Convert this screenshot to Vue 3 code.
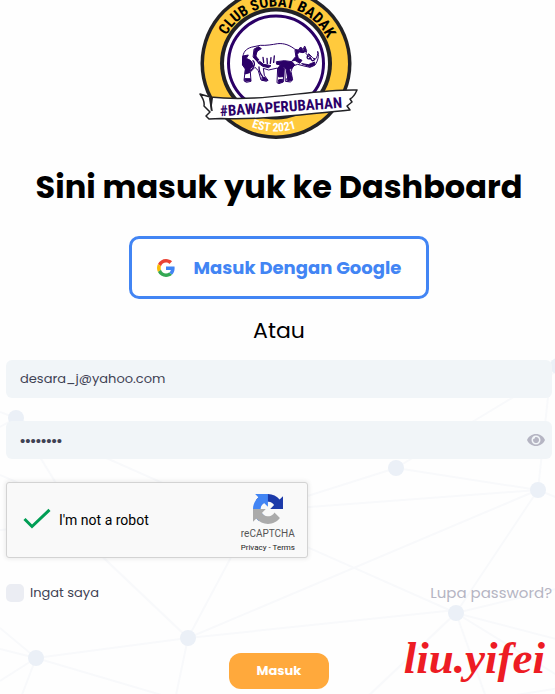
<script setup>
import { ref } from 'vue'

const email = ref('desara_j@yahoo.com')
const password = ref('password')
const showPassword = ref(false)
const notRobot = ref(true)
const remember = ref(false)

// Background network: nodes and the lines between them
const nodes = [
  [558, 366], [16, 418], [396, 468], [538, 490], [456, 613], [188, 638], [36, 658]
]

const links = [
  [396, 468, 560, 369], [396, 468, 538, 490], [396, 468, 200, 530],
  [538, 490, 552, 360], [538, 490, 0, 530], [538, 490, 188, 638],
  [538, 490, 456, 613], [538, 490, 560, 499], [16, 418, 456, 613],
  [16, 418, 100, 555], [16, 418, 0, 412], [16, 418, 0, 427],
  [0, 475, 30, 488], [30, 488, 188, 638], [188, 638, 270, 484],
  [188, 638, 456, 610], [188, 638, 36, 658], [188, 638, 175, 700],
  [36, 658, 0, 628], [36, 658, 0, 649], [36, 658, 0, 681],
  [36, 658, 20, 700], [36, 658, 165, 696], [456, 613, 560, 640],
  [456, 613, 560, 677], [456, 613, 487, 700], [456, 613, 364, 700],
  [456, 613, 560, 588], [510, 696, 560, 688]
]

const togglePassword = () => {
  showPassword.value = !showPassword.value
}
</script>

<template>
  <div class="login-page">
    <svg class="network" viewBox="0 0 555 694" preserveAspectRatio="xMinYMin slice" aria-hidden="true">
      <line v-for="(l, i) in links" :key="'l' + i" :x1="l[0]" :y1="l[1]" :x2="l[2]" :y2="l[3]" />
      <circle v-for="(n, i) in nodes" :key="'n' + i" :cx="n[0]" :cy="n[1]" r="8" />
    </svg>

    <main class="content">
      <svg class="logo" viewBox="0 0 160 139" role="img" aria-label="Club Sobat Badak">
        <defs>
          <path id="arc-top" d="M20 63.500 A57 57 0 0 1 134 63.500" />
          <path id="arc-bottom" d="M9 63.500 A68 68 0 0 0 145 63.500" />
        </defs>
        <!-- Rings -->
        <circle cx="77" cy="63.500" r="75.500" fill="#222226" />
        <circle cx="77" cy="63.500" r="72" fill="#ffca3d" />
        <circle cx="77" cy="63.500" r="56" fill="#222226" />
        <circle cx="77" cy="63.500" r="52" fill="#fff" />
        <circle cx="77" cy="63.500" r="47.500" fill="#fff" stroke="#2b0067" stroke-width="3" />
        <text class="logo-top"><textPath href="#arc-top" startOffset="51%">CLUB SOBAT BADAK</textPath></text>
        <!-- Rhino -->
        <g transform="translate(36 38) scale(.3333)" stroke="#2b0067" stroke-width="3" stroke-linejoin="round" stroke-linecap="round">
          <path fill="#fff" d="M24 54 C26 38 38 29 57 26 L76 22 C94 23 111 20 128 17 C148 15 165 22 180 34 L190 36 L197 27 L204 34 L209 24 L215 38 L213 46 L223 58 L229 63 L221 47 L233 59 L240 65 C246 58 250 49 248 40 C253 51 249 70 239 82 L225 88 L207 84 L188 79 L174 84 L168 100 L173 126 L166 132 L151 130 L149 92 L146 92 L145 132 L132 137 L126 134 L128 90 L101 96 L85 91 L88 112 L99 127 L94 130 L78 126 L70 98 L60 88 L46 102 L48 130 L34 133 L27 128 L31 93 L23 82 Z" />
          <path fill="#2b0067" d="M58 33 L70 26 L79 32 L66 40 L62 54 L72 66 L64 68 L55 58 Z M24 54 L40 51 L34 61 L46 67 L51 73 L55 84 L46 92 L44 104 L30 108 L32 93 L23 80 Z M74 70 L86 79 L108 83 L101 89 L83 85 L71 76 Z M125 71 L148 68 L171 71 L179 80 L172 90 L163 94 L171 121 L158 121 L153 92 L146 88 L144 116 L131 117 L129 91 L136 80 L126 79 Z M181 37 L192 38 L197 29 L205 38 L210 28 L213 40 L204 44 L193 42 L187 49 L190 61 L201 67 L194 76 L180 67 L171 69 L182 56 Z M201 77 L220 80 L239 72 L239 81 L225 86 Z M30 122 L46 122 L47 128 L31 130 Z M82 118 L91 119 L98 127 L82 127 Z M132 125 L143 124 L143 132 L131 134 Z M156 122 L168 121 L171 127 L158 130 Z" />
          <path fill="none" stroke-width="4" d="M84 58 L86 73 M96 61 L97 77 M108 59 L106 76 M118 54 L116 73 M66 40 C59 49 62 65 71 75 M226 61 C218 66 213 59 220 50 M238 62 C240 68 231 71 228 64 M72 87 C72 101 77 109 83 116 M54 68 C62 75 58 88 47 98" />
        </g>
        <!-- Ribbon -->
        <path fill="#fff" stroke="#222226" stroke-width="1.500" stroke-linejoin="round" d="M11 97 L1 94 Q6 101 5 106 L11 112 L7 116 L10 119 L22 118.500 C70 120 104 114 151 110 L148 106 L153 102 L151 99 Q155 97 158 90 C110 89 64 103 11 97 L13 111" />
        <path fill="#222226" d="M10 98 L14 98 L12 112 Z" />
        <text class="logo-ribbon" x="82" y="112" transform="rotate(-4 82 107)">#BAWAPERUBAHAN</text>
        <text class="logo-est"><textPath href="#arc-bottom" startOffset="49%">EST 2021</textPath></text>
      </svg>

      <h1>Sini masuk yuk ke Dashboard</h1>

      <button type="button" class="google-btn">
        <svg viewBox="0 0 48 48" aria-hidden="true">
          <path fill="#ea4335" d="M24 9.500c3.540 0 6.710 1.220 9.210 3.600l6.850-6.850C35.900 2.380 30.470 0 24 0 14.620 0 6.510 5.380 2.560 13.220l7.980 6.190C12.430 13.720 17.740 9.500 24 9.500z" />
          <path fill="#4285f4" d="M46.980 24.550c0-1.570-.15-3.090-.38-4.550H24v9.020h12.940c-.58 2.960-2.260 5.480-4.780 7.180l7.730 6c4.510-4.180 7.090-10.360 7.090-17.650z" />
          <path fill="#fbbc05" d="M10.530 28.590c-.48-1.450-.76-2.990-.76-4.590s.27-3.140.76-4.590l-7.980-6.190C.92 16.460 0 20.120 0 24c0 3.880.92 7.540 2.560 10.780l7.970-6.190z" />
          <path fill="#34a853" d="M24 48c6.480 0 11.930-2.130 15.890-5.810l-7.730-6c-2.150 1.450-4.920 2.300-8.160 2.300-6.260 0-11.570-4.220-13.470-9.910l-7.980 6.190C6.510 42.620 14.620 48 24 48z" />
        </svg>
        <span>Masuk Dengan Google</span>
      </button>

      <p class="divider">Atau</p>

      <form class="login-form" @submit.prevent>
        <input v-model="email" class="field" type="email" aria-label="Email">

        <div class="password">
          <input v-model="password" class="field" :type="showPassword ? 'text' : 'password'" aria-label="Password">
          <button type="button" class="eye" aria-label="Password" @click="togglePassword">
            <svg viewBox="0 0 18 12" aria-hidden="true">
              <path fill="#b5b5c3" fill-rule="evenodd" d="M9 0C13 0 16.500 2.500 18 6C16.500 9.500 13 12 9 12S1.500 9.500 0 6C1.500 2.500 5 0 9 0zM9 1.500a4.500 4.500 0 1 0 0 9a4.500 4.500 0 0 0 0-9zM9 3a3 3 0 1 1-2.800 2A1.500 1.500 0 0 0 8 3.200A3 3 0 0 1 9 3z" />
            </svg>
          </button>
        </div>

        <div class="captcha">
          <label class="robot">
            <span class="robot-check">
              <input v-model="notRobot" type="checkbox">
              <svg v-if="notRobot" viewBox="0 0 28 22" aria-hidden="true">
                <path d="M1.500 10 L9 17.500 L26.500 0.800" fill="none" stroke="#009e55" stroke-width="3" />
              </svg>
            </span>
            <span>I'm not a robot</span>
          </label>
          <div class="brand">
            <svg viewBox="0 0 64 64" aria-hidden="true">
              <path fill="#1c3aa9" d="M64 31.955l-.033-1.370V4.687l-7.160 7.160C50.948 4.674 42.033.093 32.050.093c-10.400 0-19.622 4.960-25.458 12.640l11.736 11.860a15.550 15.550 0 0 1 4.754-5.334c2.050-1.600 4.952-2.906 8.968-2.906.485 0 .86.057 1.135.163 4.976.393 9.288 3.140 11.828 7.124l-8.307 8.307L64 31.953" />
              <path fill="#4285f4" d="M31.862.094l-1.370.033H4.594l7.160 7.160C4.580 13.147 0 22.060 0 32.046c0 10.400 4.960 19.622 12.640 25.458L24.500 45.768a15.550 15.550 0 0 1-5.334-4.754c-1.600-2.050-2.906-4.952-2.906-8.968 0-.485.057-.86.163-1.135.393-4.976 3.140-9.288 7.124-11.828l8.307 8.307L31.860.095" />
              <path fill="#ababab" d="M.001 32.045l.033 1.370v25.898l7.160-7.160c5.860 7.173 14.774 11.754 24.760 11.754 10.400 0 19.622-4.960 25.458-12.640l-11.736-11.860a15.550 15.550 0 0 1-4.754 5.334c-2.050 1.600-4.952 2.906-8.968 2.906-.485 0-.86-.057-1.135-.163-4.976-.393-9.288-3.140-11.828-7.124l8.307-8.307c-10.522.04-22.400.066-27.295-.005" />
            </svg>
            <span class="brand-name">reCAPTCHA</span>
            <span class="brand-links"><a href="#">Privacy</a> - <a href="#">Terms</a></span>
          </div>
        </div>

        <div class="options">
          <label class="remember">
            <input v-model="remember" type="checkbox">
            <span>Ingat saya</span>
          </label>
          <a href="#" class="forgot">Lupa password?</a>
        </div>

        <button type="submit" class="submit-btn">Masuk</button>
      </form>
    </main>

    <span class="signature">liu.yifei</span>
  </div>
</template>

<style>
body {
  margin: 0;
  background: #fefefe;
}
</style>

<style scoped>
.login-page {
  position: relative;
  min-height: 100vh;
  overflow: hidden;
  font-family: Poppins, Inter, sans-serif;
  color: #000;
}

.login-page * {
  box-sizing: border-box;
}

.network {
  position: absolute;
  inset: 0;
  width: 100%;
  height: 100%;
}

.network line {
  stroke: #f8f9fb;
  stroke-width: 2;
}

.network circle {
  fill: #ebf0f7;
}

.content {
  position: relative;
  display: flex;
  flex-direction: column;
  align-items: center;
  padding: 0 3px 0 6px;
}

.logo {
  width: 160px;
  height: 139px;
}

.logo text {
  text-anchor: middle;
  font-family: "Liberation Sans Narrow", "Roboto Condensed", Roboto, sans-serif;
  font-weight: 700;
}

.logo .logo-top {
  font-size: 15px;
  fill: #000;
}

.logo .logo-ribbon {
  font-size: 15px;
  fill: #2b0067;
}

.logo .logo-est {
  font-size: 12px;
  fill: #fff;
}

h1 {
  margin: 24px 0 25px;
  font-size: 32px;
  line-height: 48px;
  font-weight: 700;
  text-align: center;
  white-space: nowrap;
}

button {
  font-family: inherit;
  cursor: pointer;
}

.google-btn {
  display: flex;
  align-items: center;
  gap: 19px;
  height: 63px;
  padding: 0 25px;
  border: 3px solid #4285f4;
  border-radius: 10px;
  background: #fff;
  color: #4285f4;
  font-size: 18px;
  font-weight: 700;
  white-space: nowrap;
}

.google-btn svg {
  width: 18px;
  height: 18px;
}

.divider {
  margin: 15px 0 12px;
  font-size: 22px;
  line-height: 34px;
}

.login-form {
  display: flex;
  flex-direction: column;
  width: 100%;
}

.field {
  width: 100%;
  height: 38px;
  padding: 0 14px;
  border: 0;
  border-radius: 6px;
  outline: none;
  background: #f1f5f8;
  color: #3f4254;
  font-family: inherit;
  font-size: 13px;
}

.password {
  position: relative;
  margin: 23px 0;
}

.password .field {
  display: block;
  padding-right: 40px;
}

.password .field[type='password'] {
  font-family: "Liberation Sans", sans-serif;
  font-size: 15px;
}

.eye {
  position: absolute;
  top: 0;
  right: 7px;
  display: flex;
  align-items: center;
  height: 100%;
  padding: 0;
  border: 0;
  background: none;
}

.eye svg {
  width: 18px;
  height: 12px;
}

.captcha {
  display: flex;
  align-items: center;
  justify-content: space-between;
  width: 302px;
  height: 76px;
  padding: 0 12px 0 16px;
  border: 1px solid #d3d3d3;
  border-radius: 3px;
  background: #f9f9f9;
  box-shadow: 0 0 4px 1px rgba(0, 0, 0, 0.08);
  font-family: Roboto, sans-serif;
}

.robot {
  display: flex;
  align-items: center;
  gap: 8px;
  font-size: 14px;
}

.robot-check {
  display: grid;
}

.robot-check input,
.robot-check svg {
  grid-area: 1 / 1;
  width: 28px;
  height: 22px;
  margin: 0;
}

.robot-check svg {
  overflow: visible;
}

.robot-check input {
  appearance: none;
}

.brand {
  display: flex;
  flex-direction: column;
  align-items: center;
  padding-top: 5px;
  color: #555;
}

.brand svg {
  width: 30px;
  height: 30px;
}

.brand-name {
  font-size: 10px;
  line-height: 20px;
}

.brand-links {
  font-size: 8px;
  line-height: 8px;
  color: #222;
}

.brand-links a {
  color: inherit;
  text-decoration: none;
}

.options {
  display: flex;
  align-items: center;
  justify-content: space-between;
  margin: 23px 0 48px;
  line-height: 24px;
}

.remember {
  display: flex;
  align-items: center;
  gap: 6px;
  color: #3f4254;
  font-size: 13px;
}

.remember input {
  appearance: none;
  width: 18px;
  height: 18px;
  margin: 0;
  border-radius: 5px;
  background: #ebedf3;
}

.remember input:checked {
  background: #ffa93c;
}

.forgot {
  color: #b5b5c3;
  font-size: 15px;
  text-decoration: none;
}

.submit-btn {
  align-self: center;
  width: 100px;
  height: 36px;
  border: 0;
  border-radius: 12px;
  background: #ffa93c;
  color: #fff;
  font-size: 13px;
  font-weight: 700;
}

.signature {
  position: absolute;
  right: 10px;
  bottom: 8px;
  color: #ed1c24;
  font-family: "Brush Script MT", "Liberation Serif", serif;
  font-size: 45px;
  font-style: italic;
  font-weight: 700;
  line-height: 56px;
}
</style>
